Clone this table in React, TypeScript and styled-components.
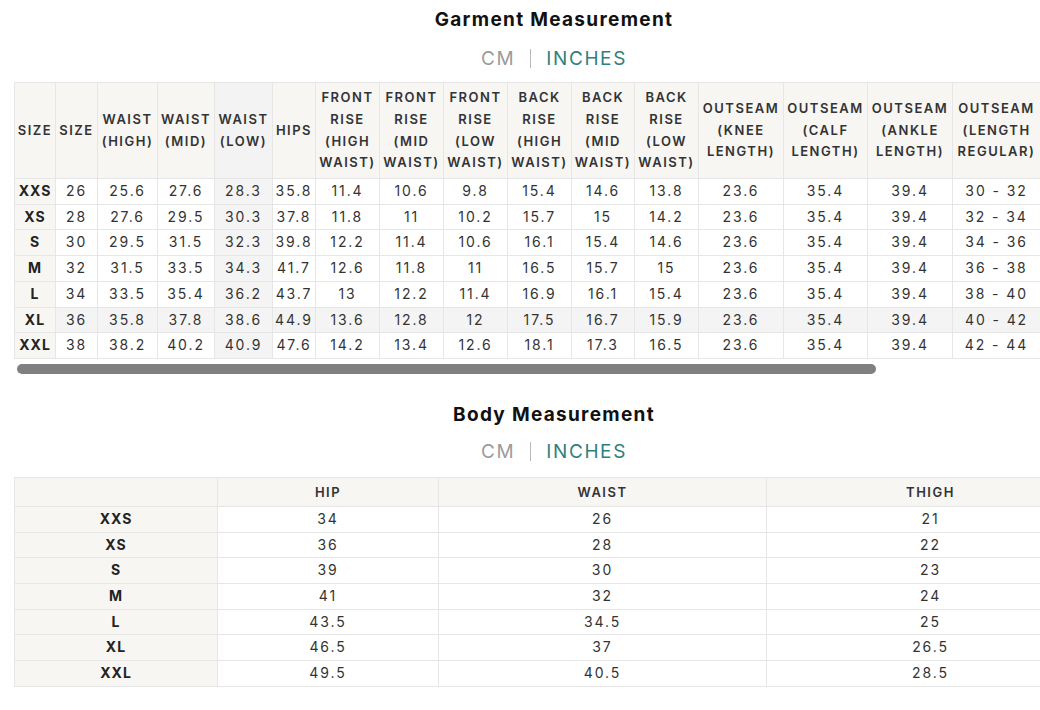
import React from "react";
import styled, { createGlobalStyle } from "styled-components";

const Global = createGlobalStyle`
  html, body { margin: 0; padding: 0; background: #fff; overflow: hidden; }
  body { font-family: Inter, "Noto Sans", Arial, sans-serif; color: #333; }
`;

const Page = styled.div`
  width: 1080px;
  padding: 8px 0 0 14px;
  display: flex;
  flex-direction: column;
`;

const Section = styled.section<{ $gap?: number }>`
  display: flex;
  flex-direction: column;
  align-items: stretch;
  margin-top: ${(p) => p.$gap ?? 0}px;
`;

const Title = styled.h2`
  margin: 0;
  text-align: center;
  font-size: 19px;
  line-height: 24px;
  font-weight: 700;
  letter-spacing: 1.3px;
  color: #111;
`;

const UnitToggle = styled.div<{ $gap: number }>`
  margin-top: ${(p) => p.$gap}px;
  display: flex;
  justify-content: center;
  align-items: center;
  gap: 15px;
  height: 24px;
`;

const UnitOption = styled.span<{ $active?: boolean }>`
  font-size: 19px;
  letter-spacing: 1.6px;
  font-weight: 400;
  color: ${(p) => (p.$active ? "#2f7f7c" : "#9b9b9b")};
`;

const Divider = styled.span`
  width: 1px;
  height: 19px;
  background: #b8b8b8;
`;

const TableArea = styled.div<{ $gap: number }>`
  margin-top: ${(p) => p.$gap}px;
  width: 1080px;
  overflow: hidden;
`;

const ScrollBar = styled.div`
  margin: 5px 0 0 3px;
  width: 859px;
  height: 10px;
  border-radius: 5px;
  background: #808080;
`;

const Table = styled.table<{ $width: number }>`
  width: ${(p) => p.$width}px;
  border-collapse: collapse;
  table-layout: fixed;
`;

const HeadCell = styled.th<{ $hl?: boolean; $lh: number }>`
  border: 1px solid #e6e6e6;
  background: ${(p) => (p.$hl ? "#f3f3f3" : "#f7f6f3")};
  padding: 4px 2px;
  font-size: 13px;
  line-height: ${(p) => p.$lh}px;
  font-weight: 600;
  letter-spacing: 1.5px;
  color: #333;
  text-align: center;
  vertical-align: middle;
  text-transform: uppercase;
`;

const LabelCell = styled.td`
  border: 1px solid #e6e6e6;
  background: #f7f6f3;
  padding: 4px 2px;
  font-size: 14px;
  line-height: 16.7px;
  font-weight: 700;
  letter-spacing: 1px;
  color: #222;
  text-align: center;
  white-space: nowrap;
`;

const Cell = styled.td<{ $hl?: boolean }>`
  border: 1px solid #e6e6e6;
  background: ${(p) => (p.$hl ? "#f4f4f4" : "#fff")};
  padding: 4px 2px;
  font-size: 14px;
  line-height: 16.7px;
  font-weight: 400;
  letter-spacing: 1.9px;
  color: #333;
  text-align: center;
  white-space: nowrap;
`;

const garmentCols: { label: string; w: number }[] = [
  { label: "Size", w: 41 },
  { label: "Size", w: 42 },
  { label: "Waist (High)", w: 60 },
  { label: "Waist (Mid)", w: 57 },
  { label: "Waist (Low)", w: 58 },
  { label: "Hips", w: 43 },
  { label: "Front Rise (High Waist)", w: 64 },
  { label: "Front Rise (Mid Waist)", w: 64 },
  { label: "Front Rise (Low Waist)", w: 64 },
  { label: "Back Rise (High Waist)", w: 64 },
  { label: "Back Rise (Mid Waist)", w: 63 },
  { label: "Back Rise (Low Waist)", w: 64 },
  { label: "Outseam (Knee Length)", w: 85 },
  { label: "Outseam (Calf Length)", w: 84 },
  { label: "Outseam (Ankle Length)", w: 85 },
  { label: "Outseam (Length Regular)", w: 88 },
];

const garmentRows: string[][] = [
  ["XXS", "26", "25.6", "27.6", "28.3", "35.8", "11.4", "10.6", "9.8", "15.4", "14.6", "13.8", "23.6", "35.4", "39.4", "30 - 32"],
  ["XS", "28", "27.6", "29.5", "30.3", "37.8", "11.8", "11", "10.2", "15.7", "15", "14.2", "23.6", "35.4", "39.4", "32 - 34"],
  ["S", "30", "29.5", "31.5", "32.3", "39.8", "12.2", "11.4", "10.6", "16.1", "15.4", "14.6", "23.6", "35.4", "39.4", "34 - 36"],
  ["M", "32", "31.5", "33.5", "34.3", "41.7", "12.6", "11.8", "11", "16.5", "15.7", "15", "23.6", "35.4", "39.4", "36 - 38"],
  ["L", "34", "33.5", "35.4", "36.2", "43.7", "13", "12.2", "11.4", "16.9", "16.1", "15.4", "23.6", "35.4", "39.4", "38 - 40"],
  ["XL", "36", "35.8", "37.8", "38.6", "44.9", "13.6", "12.8", "12", "17.5", "16.7", "15.9", "23.6", "35.4", "39.4", "40 - 42"],
  ["XXL", "38", "38.2", "40.2", "40.9", "47.6", "14.2", "13.4", "12.6", "18.1", "17.3", "16.5", "23.6", "35.4", "39.4", "42 - 44"],
];

const bodyCols = [
  { label: "", w: 203 },
  { label: "Hip", w: 221 },
  { label: "Waist", w: 328 },
  { label: "Thigh", w: 328 },
];

const bodyRows: string[][] = [
  ["XXS", "34", "26", "21"],
  ["XS", "36", "28", "22"],
  ["S", "39", "30", "23"],
  ["M", "41", "32", "24"],
  ["L", "43.5", "34.5", "25"],
  ["XL", "46.5", "37", "26.5"],
  ["XXL", "49.5", "40.5", "28.5"],
];

const HL_COL = 4;
const HL_ROW = 5;

function Units({ gap }: { gap: number }) {
  return (
    <UnitToggle $gap={gap}>
      <UnitOption>CM</UnitOption>
      <Divider />
      <UnitOption $active>INCHES</UnitOption>
    </UnitToggle>
  );
}

export default function App() {
  const garmentWidth = garmentCols.reduce((s, c) => s + c.w, 0);
  return (
    <>
      <Global />
      <Page>
        <Section>
          <Title>Garment Measurement</Title>
          <Units gap={14} />
          <TableArea $gap={12}>
            <Table $width={garmentWidth}>
              <colgroup>
                {garmentCols.map((c, i) => (
                  <col key={i} style={{ width: c.w }} />
                ))}
              </colgroup>
              <thead>
                <tr>
                  {garmentCols.map((c, i) => (
                    <HeadCell key={i} $lh={21.75} $hl={i === HL_COL}>
                      {c.label}
                    </HeadCell>
                  ))}
                </tr>
              </thead>
              <tbody>
                {garmentRows.map((r, ri) => (
                  <tr key={ri}>
                    {r.map((v, ci) =>
                      ci === 0 ? (
                        <LabelCell key={ci}>{v}</LabelCell>
                      ) : (
                        <Cell key={ci} $hl={ci === HL_COL || ri === HL_ROW}>
                          {v}
                        </Cell>
                      )
                    )}
                  </tr>
                ))}
              </tbody>
            </Table>
            <ScrollBar />
          </TableArea>
        </Section>
        <Section $gap={29}>
          <Title>Body Measurement</Title>
          <Units gap={13} />
          <TableArea $gap={13}>
            <Table $width={1080}>
              <colgroup>
                {bodyCols.map((c, i) => (
                  <col key={i} style={{ width: c.w }} />
                ))}
              </colgroup>
              <thead>
                <tr>
                  {bodyCols.map((c, i) => (
                    <HeadCell key={i} $lh={20}>
                      {c.label}
                    </HeadCell>
                  ))}
                </tr>
              </thead>
              <tbody>
                {bodyRows.map((r, ri) => (
                  <tr key={ri}>
                    {r.map((v, ci) =>
                      ci === 0 ? (
                        <LabelCell key={ci}>{v}</LabelCell>
                      ) : (
                        <Cell key={ci}>{v}</Cell>
                      )
                    )}
                  </tr>
                ))}
              </tbody>
            </Table>
          </TableArea>
        </Section>
      </Page>
    </>
  );
}
